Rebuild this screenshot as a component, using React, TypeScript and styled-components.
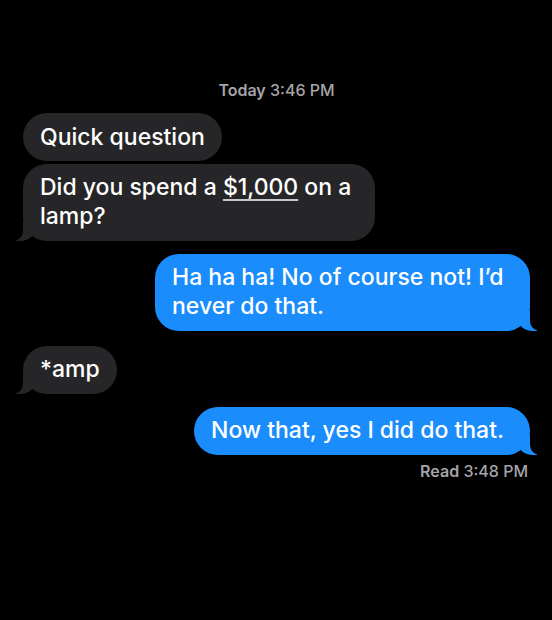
import React from "react";
import styled, { createGlobalStyle, css } from "styled-components";

const Global = createGlobalStyle`
  html, body { margin: 0; padding: 0; background: #000; }
  body { font-family: Inter, "Liberation Sans", Arial, sans-serif; -webkit-font-smoothing: antialiased; }
`;

const Screen = styled.div`
  width: 552px;
  height: 620px;
  background: #000;
  box-sizing: border-box;
  padding: 80px 22px 0 23px;
  display: flex;
  flex-direction: column;
`;

const Stamp = styled.div<{ $align: "center" | "right" }>`
  font-size: 16px;
  line-height: 20px;
  font-weight: 500;
  color: #a4a4a8;
  text-align: ${(p) => p.$align};
  b { font-weight: 600; }
  ${(p) =>
    p.$align === "center"
      ? css`margin-bottom: 13px;`
      : css`margin-top: 6px; padding-right: 2px;`}
`;

const Row = styled.div<{ $me?: boolean; $gap: number }>`
  display: flex;
  justify-content: ${(p) => (p.$me ? "flex-end" : "flex-start")};
  margin-top: ${(p) => p.$gap}px;
`;

const Bubble = styled.div<{ $me?: boolean; $tail?: boolean; $max?: number }>`
  position: relative;
  box-sizing: border-box;
  max-width: ${(p) => p.$max ?? 380}px;
  padding: 9.5px ${(p) => (p.$me ? 26 : 17)}px 9.5px 17px;
  border-radius: 24px;
  font-size: 23px;
  font-weight: 500;
  line-height: 29px;
  color: #fff;
  background: ${(p) => (p.$me ? "#1a8cfb" : "#262628")};
  ${(p) =>
    p.$tail &&
    (p.$me
      ? css`
          &::before {
            content: "";
            position: absolute;
            bottom: 0;
            right: -7px;
            width: 20px;
            height: 20px;
            background: #1a8cfb;
            border-bottom-left-radius: 16px 14px;
          }
          &::after {
            content: "";
            position: absolute;
            bottom: 0;
            right: -10px;
            width: 10px;
            height: 20px;
            background: #000;
            border-bottom-left-radius: 10px;
          }
        `
      : css`
          &::before {
            content: "";
            position: absolute;
            bottom: 0;
            left: -7px;
            width: 20px;
            height: 20px;
            background: #262628;
            border-bottom-right-radius: 16px 14px;
          }
          &::after {
            content: "";
            position: absolute;
            bottom: 0;
            left: -10px;
            width: 10px;
            height: 20px;
            background: #000;
            border-bottom-right-radius: 10px;
          }
        `)}
`;

const Money = styled.span`
  text-decoration: underline;
  text-decoration-thickness: 1.5px;
  text-underline-offset: 4px;
  text-decoration-color: #c8c8cc;
`;

export default function App() {
  return (
    <>
      <Global />
      <Screen>
        <Stamp $align="center">
          <b>Today</b> 3:46 PM
        </Stamp>
        <Row $gap={0}>
          <Bubble>Quick question</Bubble>
        </Row>
        <Row $gap={2.5}>
          <Bubble $tail $max={352}>
            Did you spend a <Money>$1,000</Money> on a lamp?
          </Bubble>
        </Row>
        <Row $me $gap={13}>
          <Bubble $me $tail $max={375}>
            Ha ha ha! No of course not! I’d never do that.
          </Bubble>
        </Row>
        <Row $gap={15}>
          <Bubble $tail>*amp</Bubble>
        </Row>
        <Row $me $gap={13}>
          <Bubble $me $tail>
            Now that, yes I did do that.
          </Bubble>
        </Row>
        <Stamp $align="right">
          <b>Read</b> 3:48 PM
        </Stamp>
      </Screen>
    </>
  );
}
